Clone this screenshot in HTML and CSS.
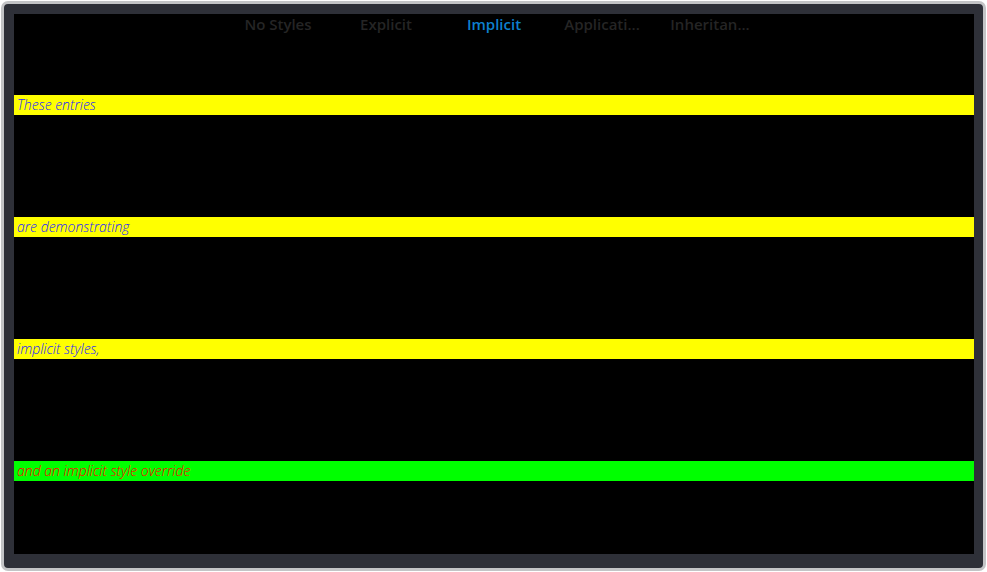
FILE: index.html
```html
<!DOCTYPE html>
<html>
<head>
<meta charset="utf-8">
<link rel="stylesheet" href="styles.css">
</head>
<body>
<div class="frame">
  <div class="screen">
    <div class="tabs">
      <div class="tab">No Styles</div>
      <div class="tab">Explicit</div>
      <div class="tab active">Implicit</div>
      <div class="tab">Applicati...</div>
      <div class="tab">Inheritan...</div>
    </div>
    <div class="list">
      <div class="item"><div class="entry">These entries</div></div>
      <div class="item"><div class="entry">are demonstrating</div></div>
      <div class="item"><div class="entry">implicit styles,</div></div>
      <div class="item"><div class="entry override">and an implicit style override</div></div>
    </div>
  </div>
</div>
</body>
</html>
```
FILE: styles.css
```css
html, body {
  margin: 0;
  padding: 0;
  background: #ffffff;
}
body {
  width: 987px;
  height: 572px;
  overflow: hidden;
}
.frame {
  margin: 1px 0 0 1px;
  width: 985px;
  height: 570px;
  box-sizing: border-box;
  border: 3px solid #c3c4c6;
  border-radius: 7px;
  background: #2e3038;
  padding: 10px 9px 14px 10px;
}
.screen {
  width: 960px;
  height: 540px;
  background: #000000;
  display: flex;
  flex-direction: column;
}
.tabs {
  height: 30px;
  display: flex;
  justify-content: center;
  align-items: flex-start;
}
.tab {
  width: 108px;
  text-align: center;
  font-family: "Open Sans", sans-serif;
  font-weight: 600;
  font-size: 15px;
  line-height: 21px;
  color: #252525;
  white-space: nowrap;
  overflow: hidden;
}
.tab.active {
  color: #0d80cf;
}
.list {
  display: flex;
  flex-direction: column;
}
.item {
  height: 122px;
  display: flex;
  align-items: center;
}
.entry {
  flex: 1;
  height: 20px;
  line-height: 20px;
  background: #ffff00;
  color: #2424ff;
  font-family: "Open Sans", sans-serif;
  font-style: italic;
  font-weight: 300;
  font-size: 14px;
  padding-left: 3px;
}
.entry.override {
  background: #00ff00;
  color: #ff0000;
}
```
